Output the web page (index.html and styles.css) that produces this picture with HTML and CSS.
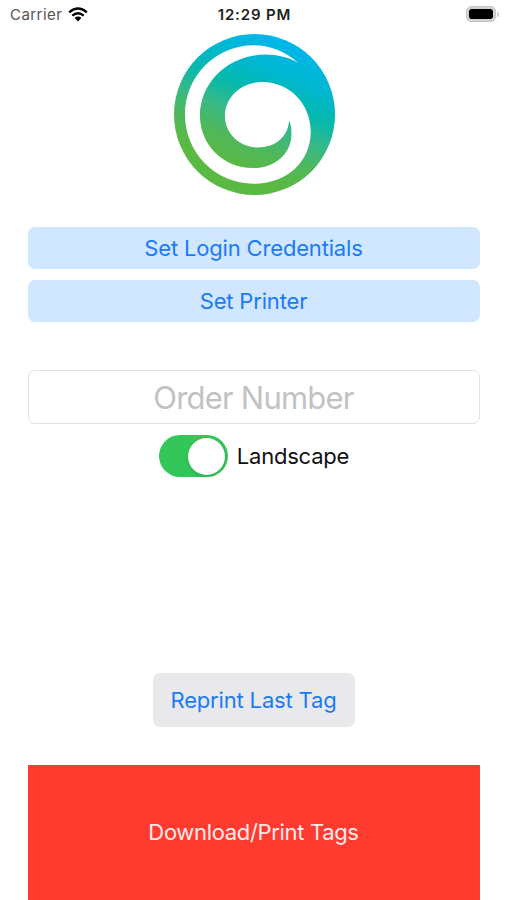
FILE: index.html
```html
<!DOCTYPE html>
<html lang="en">
  <head>
    <meta charset="UTF-8" />
    <title>Tag Printer</title>
    <meta name="viewport" content="width=device-width, initial-scale=1.0" />
    <link rel="stylesheet" href="styles.css">
  </head>
  <body>
    <header class="status-bar">
      <div class="carrier">
        <span class="carrier-name">Carrier</span>
        <svg class="wifi" viewBox="0 0 20 15" width="20" height="15">
          <path d="M1.2 5.3Q10-2.3 18.8 5.3" />
          <path d="M4.3 8.7Q10 3.8 15.7 8.7" />
          <path class="wifi-dot" d="M6.6 11Q10 8.2 13.4 11L10 14.4Z" />
        </svg>
      </div>
      <div class="time">12:29 PM</div>
      <div class="battery-wrap">
        <div class="battery"></div>
        <div class="battery-cap"></div>
      </div>
    </header>
    <main class="screen">
      <svg class="logo" viewBox="29 17 484 484">
        <defs>
          <linearGradient id="swirl" gradientUnits="userSpaceOnUse" x1="400" y1="72" x2="248" y2="431">
            <stop offset="0" stop-color="#00b6e6" />
            <stop offset="0.2" stop-color="#00b7d0" />
            <stop offset="0.41" stop-color="#05b9ad" />
            <stop offset="0.62" stop-color="#3ab984" />
            <stop offset="0.8" stop-color="#4fb85b" />
            <stop offset="1" stop-color="#5ab943" />
          </linearGradient>
        </defs>
        <circle cx="271" cy="259" r="242" fill="url(#swirl)" />
        <path fill="#fff" d="M403 104C365 70 318 51 268 51C153 51 62 145 62 259C62 375 155 467 268 467C370 467 440 400 440 310C440 225 375 161 295 161C230 161 182 208 182 263C182 316 226 358 280 358C335 358 372 325 375 277C381 290 382 305 382 318C382 375 335 420 265 420C177 420 107 350 107 263C107 160 195 79 303 79C340 79 375 88 403 104Z" />
      </svg>
      <button class="button login"><span>Set Login Credentials</span></button>
      <button class="button printer"><span>Set Printer</span></button>
      <input class="order" type="text" placeholder="Order Number" />
      <label class="landscape">
        <span class="switch"><span class="knob"></span></span>
        <span class="landscape-text">Landscape</span>
      </label>
      <button class="button reprint"><span>Reprint Last Tag</span></button>
      <button class="button download"><span>Download/Print Tags</span></button>
    </main>
  </body>
</html>
```
FILE: styles.css
```css
* {
  box-sizing: border-box;
}
body {
  margin: 0;
  height: 900px;
  overflow: hidden;
  background: #fff;
  color: #111;
  font-family: Inter, "Liberation Sans", sans-serif;
  font-size: 22px;
}
.status-bar {
  display: grid;
  grid-template-columns: 1fr auto 1fr;
  align-items: center;
  height: 30px;
  padding: 0 8px 0 10px;
  font-size: 15px;
}
.carrier {
  display: flex;
  align-items: center;
  gap: 6px;
  margin-top: -1px;
  color: #555;
  letter-spacing: 0.45px;
}
.wifi {
  fill: none;
  stroke: #000;
  stroke-width: 2.3;
}
.wifi .wifi-dot {
  fill: #000;
  stroke: none;
}
.time {
  margin-top: -1px;
  font-weight: 600;
  letter-spacing: 0.85px;
  color: #222;
}
.battery-wrap {
  display: flex;
  align-items: center;
  justify-content: flex-end;
  gap: 1px;
  margin-top: -2px;
}
.battery {
  width: 30px;
  height: 16px;
  border: 1px solid #c4c4c4;
  border-radius: 5px;
  padding: 2px;
  background: #000 content-box;
  box-shadow: inset 0 0 0 2px #d2d2d2;
}
.battery-cap {
  width: 2px;
  height: 5px;
  border-radius: 0 2px 2px 0;
  background: #ccc;
}
.screen {
  display: flex;
  flex-direction: column;
  align-items: center;
  padding: 4px 27px 0 28px;
}
.logo {
  width: 161px;
  height: 161px;
}
.button {
  display: flex;
  align-items: center;
  justify-content: center;
  flex-shrink: 0;
  width: 100%;
  border: none;
  padding: 0 1px 0 0;
  border-radius: 7px;
  background: #d1e6ff;
  color: #197bf6;
  font: inherit;
  letter-spacing: -0.17px;
}
.login {
  height: 42px;
  margin-top: 32px;
}
.printer {
  height: 42px;
  margin-top: 11px;
}
.order {
  width: 100%;
  height: 54px;
  margin-top: 48px;
  padding: 0 1px 0 0;
  border: 1px solid #e1e1e1;
  border-radius: 7px;
  background: #fff;
  font: inherit;
  font-size: 31px;
  letter-spacing: -0.8px;
  text-align: center;
}
.order::placeholder {
  color: #c2c2c4;
}
.landscape {
  display: flex;
  align-items: center;
  gap: 9px;
  height: 42px;
  margin-top: 11px;
  letter-spacing: -0.22px;
}
.switch {
  display: flex;
  justify-content: flex-end;
  width: 69px;
  height: 42px;
  padding: 2.5px;
  border-radius: 21px;
  background: #33c658;
}
.knob {
  width: 37px;
  height: 37px;
  border-radius: 50%;
  background: #fff;
  box-shadow: 0 2px 4px rgba(0, 0, 0, 0.1);
}
.reprint {
  width: 202px;
  height: 54px;
  margin-top: 196px;
  background: #e9e9eb;
}
.download {
  height: 150px;
  margin-top: 38px;
  padding-bottom: 16px;
  border-radius: 0;
  background: #ff3b30;
  color: #ffebea;
  letter-spacing: -0.33px;
}
```
